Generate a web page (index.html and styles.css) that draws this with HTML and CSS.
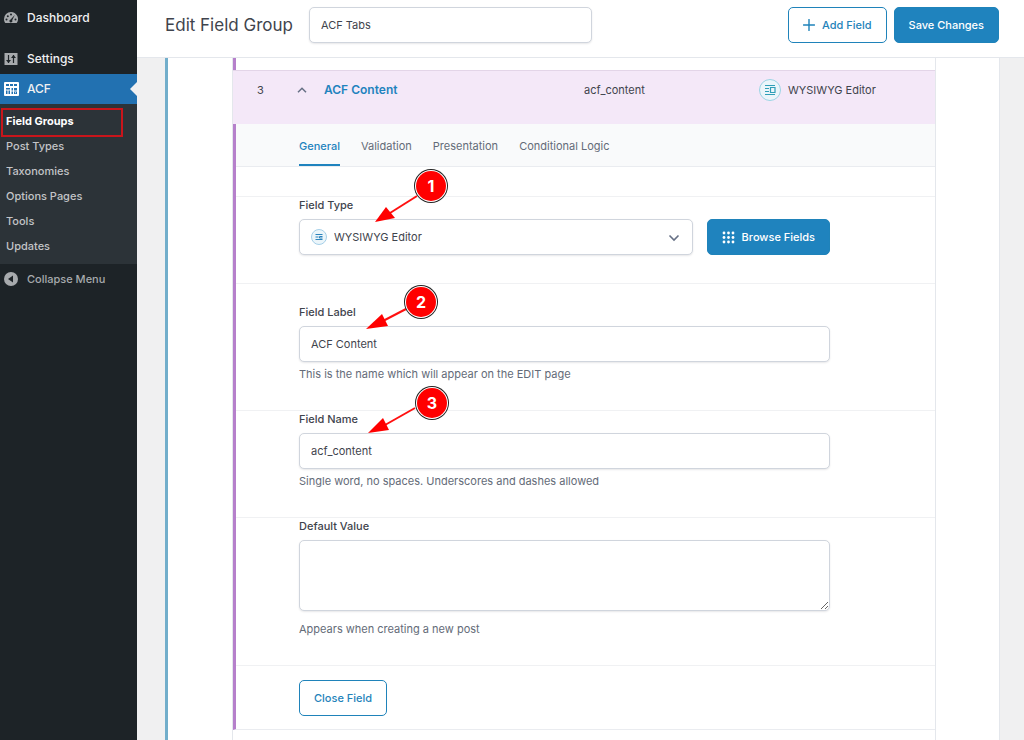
FILE: index.html
```html
<!DOCTYPE html>
<html lang="en">
	<head>
		<meta charset="utf-8">
		<meta name="viewport" content="width=device-width, initial-scale=1">
		<title>Edit Field Group</title>
		<link rel="stylesheet" href="styles.css">
	</head>
	<body>

<nav class="menu">
	<a href="#" class="menu-item">
		<svg width="14" height="14" viewBox="0 0 14 14">
			<path fill="#a7aaad" d="M7 1a7 7 0 0 0-7 7c0 1.600.500 3 1.300 4h11.400A7 7 0 0 0 7 1z"/>
			<g fill="#1d2327"><circle cx="2.500" cy="8.500" r="1"/><circle cx="3.800" cy="5.200" r="1"/><circle cx="7" cy="3.500" r="1"/><circle cx="11.500" cy="8.500" r="1"/><path d="M10.800 4 8.200 9.200a1.500 1.500 0 1 1-1.600-.700z"/></g>
		</svg>
		Dashboard
	</a>
	<div class="separator"></div>
	<a href="#" class="menu-item">
		<svg width="14" height="14" viewBox="0 0 14 14">
			<rect x="0.500" y="1" width="13" height="12" fill="#a7aaad"/>
			<path stroke="#1d2327" stroke-width="1.200" fill="none" d="M4.500 3v8M9.500 3v8"/>
			<path fill="#1d2327" d="M2 8h5l-2.500 3zM7 6h5L9.500 3z"/>
		</svg>
		Settings
	</a>
	<a href="#" class="menu-item current">
		<svg width="15" height="14" viewBox="0 0 15 14">
			<rect width="15" height="14" rx="1" fill="#fff"/>
			<g fill="#2271b1"><path d="M2 2h3v2H2zM6 2h3v2H6zM10 2h3v2h-3zM2 6h4v1.500H2zM2 8.500h1.500V12H2zM4.500 8.500H6V12H4.500zM7.500 6H9v2.500H7.500zM7.500 9.500H9V12H7.500zM10 6h3v2.500h-3zM10 9.500h3V12h-3z"/></g>
			<path fill="#fff" d="M11 10.300h1v.900h-1z"/>
		</svg>
		ACF
	</a>
	<div class="submenu">
		<a href="#" class="active">Field Groups</a>
		<a href="#">Post Types</a>
		<a href="#">Taxonomies</a>
		<a href="#">Options Pages</a>
		<a href="#">Tools</a>
		<a href="#">Updates</a>
	</div>
	<button type="button" class="menu-item collapse">
		<svg width="14" height="14" viewBox="0 0 14 14"><circle cx="7" cy="7" r="7" fill="#a7aaad"/><path fill="#1d2327" d="M9 3.500v7L4 7z"/></svg>
		Collapse Menu
	</button>
</nav>

<main>
	<header class="headerbar">
		<h1><label for="title">Edit Field Group</label></h1>
		<input type="text" id="title" class="title" value="ACF Tabs">
		<div class="actions">
			<button type="button" class="btn">
				<svg width="12" height="12" viewBox="0 0 12 12"><path d="M6 .500v11M.500 6h11" stroke="currentColor" stroke-width="1.400" stroke-linecap="round"/></svg>
				Add Field
			</button>
			<button type="button" class="btn primary">Save Changes</button>
		</div>
	</header>

	<div class="panel">
		<div class="fields">
			<div class="previous"></div>

			<div class="handle">
				<span class="order">3</span>
				<svg class="toggle" width="10" height="6" viewBox="0 0 10 6"><path d="M1 5.200 5 1.200l4 4" fill="none" stroke="#667085" stroke-width="1.500"/></svg>
				<a href="#" class="name">ACF Content</a>
				<span class="key">acf_content</span>
				<span class="type">
					<svg width="22" height="22" viewBox="0 0 22 22">
						<circle cx="11" cy="11" r="10.500" fill="#ebf5fa" stroke="#9bd4e4"/>
						<path fill="none" stroke="#2f9fb8" stroke-width="1.200" d="M6 6.500h10M6 9.500h4M6 12.500h4M6 15.500h10M11.500 8.500H16v5h-4.500z"/>
					</svg>
					WYSIWYG Editor
				</span>
			</div>

			<div class="settings">
				<div class="tabs">
					<a href="#" class="on">General</a>
					<a href="#">Validation</a>
					<a href="#">Presentation</a>
					<a href="#">Conditional Logic</a>
				</div>
				<div class="spacer"></div>

				<div class="row">
					<label for="type">Field Type</label>
					<div class="inline">
						<div class="select">
							<svg class="select-icon" width="16" height="16" viewBox="0 0 16 16">
								<circle cx="8" cy="8" r="7.500" fill="#ebf5fa" stroke="#a5cfe8"/>
								<path fill="none" stroke="#2a83bd" d="M4.500 5.500h7M4.500 8h3M4.500 10.500h7M11.500 7.500h-3v1.500h3"/>
							</svg>
							<select id="type"><option>WYSIWYG Editor</option></select>
							<svg class="arrow" width="12" height="8" viewBox="0 0 12 8"><path d="m1.500 1.500 4.500 4.500 4.500-4.500" fill="none" stroke="#667085" stroke-width="1.600"/></svg>
						</div>
						<button type="button" class="btn primary">
							<svg width="13" height="13" viewBox="0 0 13 13" fill="#fff"><circle cx="2" cy="2" r="1.400"/><circle cx="6.500" cy="2" r="1.400"/><circle cx="11" cy="2" r="1.400"/><circle cx="2" cy="6.500" r="1.400"/><circle cx="6.500" cy="6.500" r="1.400"/><circle cx="11" cy="6.500" r="1.400"/><circle cx="2" cy="11" r="1.400"/><circle cx="6.500" cy="11" r="1.400"/><circle cx="11" cy="11" r="1.400"/></svg>
							Browse Fields
						</button>
					</div>
					<svg class="step step-1" width="76" height="56" viewBox="0 0 76 56">
						<path d="M43 28 16 45" stroke="#ff1010" stroke-width="2"/>
						<path d="M1 54 12 39l9 11z" fill="#f00"/>
						<circle cx="57" cy="18" r="17" fill="#222"/><circle cx="57" cy="18" r="16" fill="#fff"/><circle cx="57" cy="18" r="15" fill="#f00"/>
						<text x="57" y="24">1</text>
					</svg>
				</div>

				<div class="row tall">
					<label for="label">Field Label</label>
					<input type="text" id="label" value="ACF Content">
					<p>This is the name which will appear on the EDIT page</p>
					<svg class="step step-2" width="76" height="56" viewBox="0 0 76 56">
						<path d="M41 25 16 38" stroke="#ff1010" stroke-width="2"/>
						<path d="M1 45 17 30l6 12z" fill="#f00"/>
						<circle cx="56" cy="18" r="17" fill="#222"/><circle cx="56" cy="18" r="16" fill="#fff"/><circle cx="56" cy="18" r="15" fill="#f00"/>
						<text x="56" y="24">2</text>
					</svg>
				</div>

				<div class="row">
					<label for="name">Field Name</label>
					<input type="text" id="name" value="acf_content">
					<p>Single word, no spaces. Underscores and dashes allowed</p>
					<svg class="step step-3" width="84" height="56" viewBox="0 0 84 56">
						<path d="M48 23 18 40" stroke="#ff1010" stroke-width="2"/>
						<path d="M1 48 16 33l6 12z" fill="#f00"/>
						<circle cx="65" cy="18" r="17" fill="#222"/><circle cx="65" cy="18" r="16" fill="#fff"/><circle cx="65" cy="18" r="15" fill="#f00"/>
						<text x="65" y="24">3</text>
					</svg>
				</div>

				<div class="row">
					<label for="default">Default Value</label>
					<textarea id="default"></textarea>
					<p class="after-area">Appears when creating a new post</p>
				</div>

				<div class="footer">
					<button type="button" class="btn">Close Field</button>
				</div>
			</div>
		</div>
	</div>
</main>

	</body>
</html>
```
FILE: styles.css
```css
* { box-sizing: border-box; }

body {
	display: flex;
	min-height: 100vh;
	margin: 0;
	background: #f0f0f1;
	color: #3f444d;
	font-family: Inter, "Liberation Sans", sans-serif;
	font-size: 11px;
	line-height: 16px;
}

a {
	text-decoration: none;
}

svg {
	display: block;
	flex: none;
}

button, input, select, textarea {
	font: inherit;
	color: inherit;
}

/* admin menu */
.menu {
	flex: none;
	width: 137px;
	padding-top: 3px;
	background: #1d2327;
}

.menu-item {
	position: relative;
	display: flex;
	align-items: center;
	gap: 9px;
	width: 100%;
	height: 30px;
	padding: 0 4px;
	color: #f0f0f1;
	font-size: 12px;
	font-weight: 500;
}

.separator {
	height: 11px;
}

.current {
	gap: 8px;
	background: #2271b1;
}

.current::after {
	content: "";
	position: absolute;
	right: 0;
	border: 7px solid transparent;
	border-left: 0;
	border-right-color: #f0f0f1;
}

.submenu {
	padding: 5px 0;
	background: #2c3338;
}

.submenu a {
	position: relative;
	display: block;
	padding: 0 6px;
	line-height: 25px;
	color: #c3c4c7;
	font-weight: 500;
}

.submenu .active {
	color: #fff;
	font-weight: 700;
}

.submenu .active::after {
	content: "";
	position: absolute;
	top: -1px;
	right: 14px;
	bottom: -3px;
	left: 1px;
	border: 2px solid #c9151b;
}

.collapse {
	border: 0;
	background: none;
	color: #a7aaad;
	font-size: 11px;
}

/* top bar */
main {
	display: flex;
	flex: 1;
	flex-direction: column;
	min-width: 0;
}

.headerbar {
	display: flex;
	align-items: flex-start;
	height: 58px;
	padding: 7px 25px 0 28px;
	border-bottom: 1px solid #e4e7ec;
	background: #fff;
}

h1 {
	margin: 0 16px 0 0;
	font-size: 17px;
	font-weight: 400;
	line-height: 36px;
}

.title {
	width: 283px;
}

.actions {
	display: flex;
	gap: 7px;
	margin-left: auto;
}

input, select, textarea {
	display: block;
	width: 100%;
	height: 36px;
	margin: 0;
	padding: 0 11px;
	border: 1px solid #d0d5dd;
	border-radius: 5px;
	background: #fff;
	box-shadow: 0 1px 2px rgba(16, 24, 40, .1);
}

.btn {
	display: flex;
	flex: none;
	align-items: center;
	justify-content: center;
	gap: 7px;
	height: 36px;
	padding: 0 14px;
	border: 1px solid #1f83ba;
	border-radius: 5px;
	background: #fff;
	color: #1f83ba;
	font-weight: 500;
}

.primary {
	background: #1f83be;
	color: #fff;
}

/* field list */
.panel {
	display: flex;
	flex: 1;
	margin: 0 24px 0 28px;
	padding: 0 63px 0 64px;
	border-left: 3px solid #72aecb;
	border-right: 1px solid #e4e7ec;
	background: #fff;
}

.fields {
	flex: 1;
	min-width: 0;
	border: 1px solid #e4e7ec;
	border-width: 0 1px;
}

.previous {
	height: 12px;
	border-left: 3px solid #b680cb;
}

.handle {
	display: grid;
	grid-template-columns: 64px 27px 260px 1fr 176px;
	align-items: start;
	height: 54px;
	padding-top: 11px;
	border-top: 1px solid #e3d5e8;
	background: #f4e8f8;
}

.order {
	padding-left: 24px;
}

.toggle {
	margin-top: 5px;
}

.name {
	color: #1f83be;
	font-size: 12px;
	font-weight: 600;
}

.type {
	display: flex;
	align-items: center;
	gap: 7px;
	height: 16px;
}

.settings {
	border-left: 3px solid #b680cb;
	border-bottom: 1px solid #eaecf0;
}

.tabs {
	display: flex;
	gap: 21px;
	height: 43px;
	padding-left: 63px;
	border-bottom: 1px solid #eaecf0;
	background: #f9fafb;
}

.tabs a {
	padding-top: 14px;
	color: #646b78;
}

.tabs .on {
	border-bottom: 2px solid #1f83be;
	color: #1f83be;
	font-weight: 500;
}

.spacer {
	height: 30px;
	border-bottom: 1px solid #f0f1f3;
}

.row {
	position: relative;
	padding: 0 105px 28px 63px;
	border-bottom: 1px solid #f0f1f3;
}

.tall {
	padding-top: 20px;
}

.row label {
	display: block;
	margin-bottom: 6px;
	font-weight: 500;
}

.row p {
	margin: 4px 0 0;
	color: #646b78;
}

.row .after-area {
	margin-top: 10px;
}

.inline {
	display: flex;
	gap: 14px;
}

.select {
	position: relative;
	flex: 1;
}

select {
	padding-left: 34px;
	appearance: none;
}

.select-icon {
	position: absolute;
	top: 10px;
	left: 12px;
}

.arrow {
	position: absolute;
	top: 15px;
	right: 13px;
}

textarea {
	height: 71px;
	resize: vertical;
}

.footer {
	padding: 14px 63px 13px;
}

/* numbered steps on top of the form */
.step {
	position: absolute;
	fill: none;
	pointer-events: none;
}

.step text {
	fill: #fff;
	font-size: 16px;
	font-weight: 700;
	text-anchor: middle;
}

.step-1 { top: -29px; left: 138px; }
.step-2 { top: 0; left: 129px; }
.step-3 { top: -26px; left: 131px; }
```
